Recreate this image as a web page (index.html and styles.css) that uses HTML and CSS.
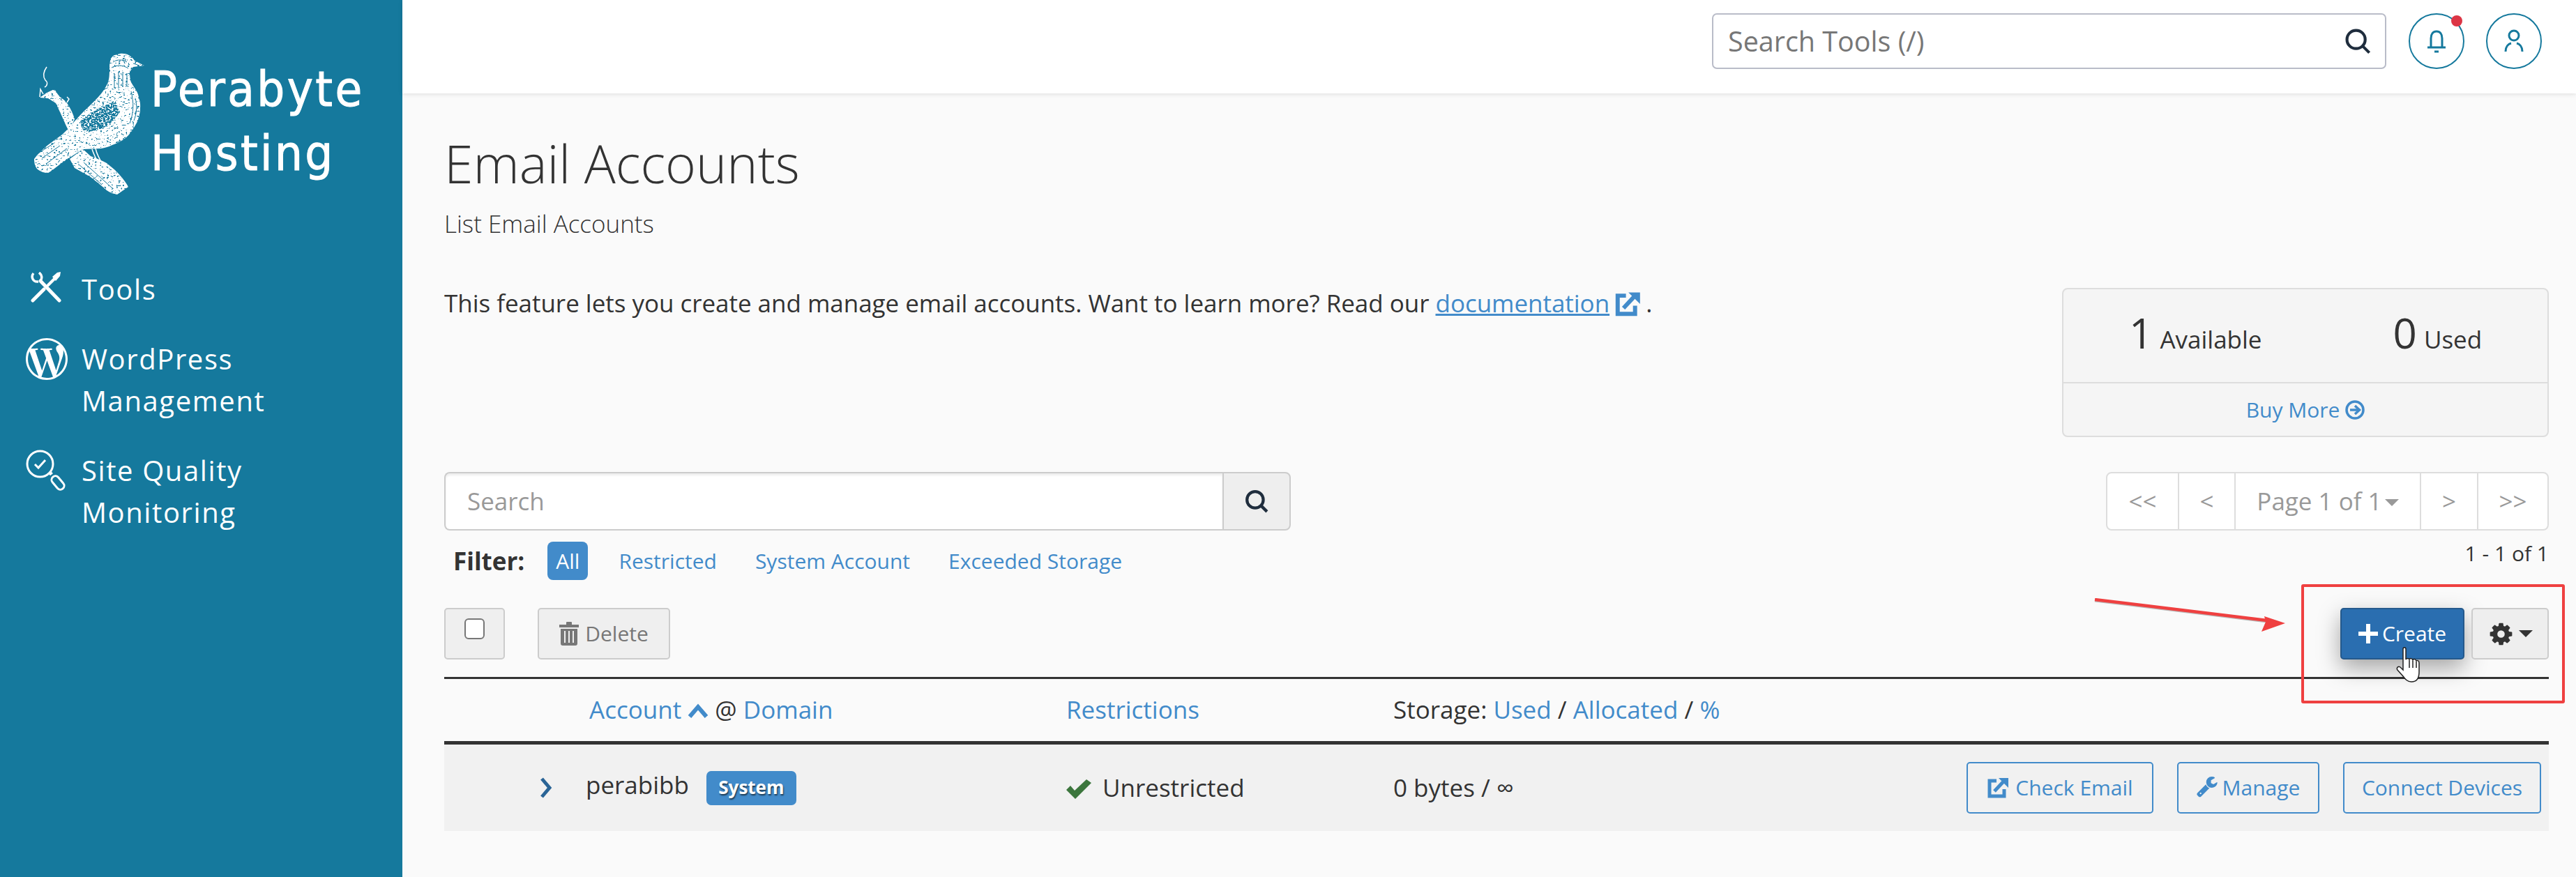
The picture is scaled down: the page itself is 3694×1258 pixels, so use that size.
FILE: index.html
```html
<!DOCTYPE html>
<html lang="en">
<head>
<meta charset="utf-8">
<title>Email Accounts</title>
<link rel="stylesheet" href="styles.css">
</head>
<body>
<div class="app">
  <aside class="sidebar">
    <div class="logo">
      <svg class="bird" viewBox="48 74 160 206" aria-hidden="true">
        <defs>
          <filter id="engrave" filterUnits="userSpaceOnUse" x="48" y="74" width="160" height="206">
            <feTurbulence type="fractalNoise" baseFrequency="0.3 0.45" numOctaves="2" seed="4" result="n"/>
            <feColorMatrix in="n" type="matrix" values="0 0 0 0 1  0 0 0 0 1  0 0 0 0 1  0 0 0 -12 8.4"/>
            <feComposite in="SourceGraphic" operator="in"/>
          </filter>
          <filter id="engrave-dark" filterUnits="userSpaceOnUse" x="48" y="74" width="160" height="206">
            <feTurbulence type="fractalNoise" baseFrequency="0.35 0.5" numOctaves="2" seed="9" result="n"/>
            <feColorMatrix in="n" type="matrix" values="0 0 0 0 1  0 0 0 0 1  0 0 0 0 1  0 0 0 -12 7"/>
            <feComposite in="SourceGraphic" operator="in"/>
          </filter>
        </defs>
        <g class="bird-shape" filter="url(#engrave)">
          <path d="M172 76C180 75 188 78 193 86L207 93 191 95 186 102C186 110 187 114 188 117 193 126 199 132 199 140 202 146 201 152 201 157 200 166 198 172 195 177 190 186 186 192 180 197 173 202 167 205 161 207 155 210 150 211 145 212L119 213C108 220 98 226 88 233 80 239 76 243 69 247 63 247 58 245 54 242 50 238 49 232 49 227 54 220 60 215 65 210 72 204 80 199 88 193 95 187 101 180 107 173 112 167 117 162 122 157 129 150 136 144 142 137 148 130 152 124 155 117 157 110 157 104 157 97 157 90 158 86 159 83 161 80 163 78 165 78Z"/>
          <path d="M100 227L119 213 130 223C138 226 146 229 153 233L165 243C172 250 179 258 184 267L168 278C162 277 157 275 153 272 146 266 138 259 130 253 122 248 114 244 107 240Z"/>
          <path d="M69 140L57 139 67 132 78 127C81 131 83 135 86 138 92 142 96 146 98 150 102 156 105 163 107 170L99 187C96 182 94 178 92 173 88 164 84 155 80 147 76 144 72 142 69 140Z"/>
        </g>
        <path class="bird-dark" d="M115 173C122 166 130 161 138 157 147 152 156 147 165 143L172 160C166 168 160 175 153 180 144 185 135 187 126 188 122 187 119 185 117 182Z" filter="url(#engrave-dark)"/>
        <g class="bird-hatch">
          <path d="M162 88C168 84 176 84 182 88"/>
          <path d="M160 96C167 92 176 92 184 97"/>
          <path d="M164 104V126M170 102V126M176 102V124M182 104V122"/>
          <path d="M188 130C192 146 192 160 186 176"/>
          <path d="M194 140C197 150 196 162 192 172"/>
          <path d="M60 226L86 208M66 234L96 212M56 218L78 204"/>
          <path d="M120 232L160 268M112 234L146 264"/>
          <circle cx="178" cy="85" r="2"/>
          <path d="M191 90L200 93"/>
        </g>
        <g class="bird-line">
          <path d="M67 95C62 102 61 108 65 114 69 117 68 122 64 124"/>
          <path d="M57 138L58 127 62 134"/>
          <path d="M96 146L99 141 96 138"/>
          <path d="M132 213C135 222 139 229 143 238"/>
          <path d="M137 212C139 221 143 228 148 236"/>
        </g>
      </svg>
      <div class="brand">
        <span class="brand-line">Perabyte</span>
        <span class="brand-line">Hosting</span>
      </div>
    </div>
    <nav class="nav">
      <a class="nav-item">
        <span class="nav-icon">
          <svg class="ic-tools" viewBox="0 0 44 44">
            <path class="t-line" d="M14 13L41 41"/>
            <path class="t-thin" d="M4 2C0 7 3 15 11 14M12 1C16 4 17 9 14 13"/>
            <path class="t-line" d="M3 41L19 25"/>
            <path class="t-line t-mid" d="M25 19L34 10"/>
            <path class="t-fill" d="M31 7L38 1 43 0 42 6 36 13Z"/>
          </svg>
        </span>
        <span>Tools</span>
      </a>
      <a class="nav-item">
        <span class="nav-icon">
          <svg class="ic-wp" viewBox="0 0 24 24"><path d="M21.469 6.825c.84 1.537 1.318 3.3 1.318 5.175 0 3.979-2.156 7.456-5.363 9.325l3.295-9.527c.615-1.54.82-2.771.82-3.864 0-.405-.026-.78-.07-1.11m-7.981.105c.647-.03 1.232-.105 1.232-.105.582-.075.514-.93-.067-.899 0 0-1.755.135-2.88.135-1.064 0-2.85-.15-2.85-.15-.585-.03-.661.855-.075.885 0 0 .54.061 1.125.09l1.68 4.605-2.37 7.08L5.354 6.9c.649-.03 1.234-.1 1.234-.1.585-.075.516-.93-.065-.896 0 0-1.746.138-2.874.138-.2 0-.438-.008-.69-.015C4.911 3.15 8.235 1.215 12 1.215c2.809 0 5.365 1.072 7.286 2.833-.046-.003-.091-.009-.141-.009-1.06 0-1.812.923-1.812 1.914 0 .89.513 1.643 1.06 2.531.411.72.89 1.643.89 2.977 0 .915-.354 1.994-.821 3.479l-1.075 3.585-3.9-11.61.001.014zM12 22.784c-1.059 0-2.081-.153-3.048-.437l3.237-9.406 3.315 9.087c.024.053.05.101.078.149-1.12.393-2.325.609-3.582.609M1.211 12c0-1.564.336-3.05.935-4.39L7.29 21.709C3.694 19.96 1.212 16.271 1.211 12M12 0C5.385 0 0 5.385 0 12s5.385 12 12 12 12-5.385 12-12S18.615 0 12 0"/></svg>
        </span>
        <span>WordPress<br>Management</span>
      </a>
      <a class="nav-item">
        <span class="nav-icon">
          <svg class="ic-quality" viewBox="0 0 60 60">
            <circle cx="20.500" cy="20.500" r="18.500"/>
            <path d="M13 21L18 26 28 15"/>
            <path d="M34 36L38 33"/>
            <rect x="35" y="42" width="22" height="11" rx="5.500" transform="rotate(50 46 47.500)"/>
          </svg>
        </span>
        <span>Site Quality<br>Monitoring</span>
      </a>
    </nav>
  </aside>

  <div class="main">
    <header class="topbar">
      <div class="tool-search">
        <span class="tool-placeholder">Search Tools (/)</span>
        <svg class="ic-search-top" viewBox="0 0 32 32"><circle cx="14" cy="14" r="11"/><path d="M22 22L30 30"/></svg>
      </div>
      <button class="round-btn">
        <svg class="ic-round" viewBox="0 0 32 36"><path d="M8 26V14C8 8 11 4 16 4S24 8 24 14V26"/><path d="M3 27H29"/><path d="M13 33H19"/></svg>
        <span class="dot"></span>
      </button>
      <button class="round-btn">
        <svg class="ic-round" viewBox="0 0 32 36"><circle cx="16" cy="10" r="7"/><path d="M4 33C4 26 8 22 12 21M28 33C28 26 24 22 20 21"/></svg>
      </button>
    </header>

    <main class="content">
      <h1 class="title">Email Accounts</h1>
      <p class="subtitle">List Email Accounts</p>

      <div class="intro-row">
        <p class="intro">This feature lets you create and manage email accounts. Want to learn more? Read our <a class="link underline">documentation</a> <svg class="ic-ext ic-ext-lg" viewBox="0 0 32 32"><path d="M14 6H4V28H25V18"/><path d="M11 21L25 6"/><path class="solid" d="M17 2H31V16Z"/></svg> .</p>
        <div class="stats">
          <div class="stats-top">
            <div class="stat"><span class="stat-num">1</span> Available</div>
            <div class="stat"><span class="stat-num">0</span> Used</div>
          </div>
          <div class="stats-foot"><a class="link">Buy More</a> <svg class="ic-arrow" viewBox="0 0 28 28"><circle cx="14" cy="14" r="12"/><path d="M7 14H19"/><path d="M14 8L20.500 14 14 20"/></svg></div>
        </div>
      </div>

      <div class="list-controls">
        <div class="controls-left">
          <div class="search-group">
            <div class="search-input">Search</div>
            <div class="search-btn"><svg class="ic-search-dark" viewBox="0 0 32 32"><circle cx="14" cy="14" r="11"/><path d="M22 22L30 30"/></svg></div>
          </div>
          <div class="filters">
            <strong class="filter-label">Filter:</strong>
            <a class="filter active">All</a>
            <a class="filter">Restricted</a>
            <a class="filter">System Account</a>
            <a class="filter">Exceeded Storage</a>
          </div>
        </div>
        <div class="controls-right">
          <div class="pager">
            <span class="pg pg-a">&lt;&lt;</span>
            <span class="pg pg-b">&lt;</span>
            <span class="pg pg-c">Page 1 of 1<i class="caret caret-gray"></i></span>
            <span class="pg pg-d">&gt;</span>
            <span class="pg pg-e">&gt;&gt;</span>
          </div>
          <div class="count">1 - 1 of 1</div>
        </div>
      </div>

      <div class="toolbar">
        <div class="tool-left">
          <div class="btn btn-check"><span class="checkbox"></span></div>
          <div class="btn btn-delete">
            <svg class="ic-trash" viewBox="0 0 28 34"><path d="M0 4H10V1Q10 0 11 0H17Q18 0 18 1V4H28V8H0Z"/><path d="M2 10H26V31Q26 34 23 34H5Q2 34 2 31ZM7 13V30H9V13ZM13 13V30H15V13ZM19 13V30H21V13Z" fill-rule="evenodd"/></svg>
            Delete
          </div>
        </div>
        <div class="tool-right">
          <div class="btn btn-create"><svg class="ic-plus" viewBox="0 0 28 28"><path d="M14 0V28M0 14H28"/></svg>Create</div>
          <div class="btn btn-gear">
            <svg class="ic-cog" viewBox="0 0 1792 1792"><path d="M1152 896q0-106-75-181t-181-75-181 75-75 181 75 181 181 75 181-75 75-181zm512-109v222q0 12-8 23t-20 13l-185 28q-19 54-39 91 35 50 107 138 10 12 10 25t-9 23q-27 37-99 108t-94 71q-12 0-26-9l-138-108q-44 23-91 38-16 136-29 186-7 28-36 28h-222q-14 0-24.500-8.500t-11.500-21.500l-28-184q-49-16-90-37l-141 107q-10 9-25 9-14 0-25-11-126-114-165-168-7-10-7-23 0-12 8-23 15-21 51-66.500t54-70.500q-27-50-41-99l-183-27q-13-2-21-12.500t-8-23.500v-222q0-12 8-23t19-13l186-28q14-46 39-92-40-57-107-138-10-12-10-24 0-10 9-23 26-36 98.500-107.500t94.500-71.500q13 0 26 10l138 107q44-23 91-38 16-136 29-186 7-28 36-28h222q14 0 24.500 8.500t11.500 21.500l28 184q49 16 90 37l142-107q9-9 24-9 13 0 25 10 129 119 165 170 7 8 7 22 0 12-8 23-15 21-51 66.500t-54 70.500q26 50 41 98l183 28q13 2 21 12.500t8 23.500z"/></svg>
            <i class="caret caret-dark"></i>
          </div>
        </div>
      </div>

      <div class="table">
        <div class="thead">
          <div><a class="link">Account</a> <svg class="ic-up" viewBox="0 0 30 22"><path d="M3 19L15 5 27 19"/></svg> @ <a class="link">Domain</a></div>
          <div><a class="link">Restrictions</a></div>
          <div>Storage: <a class="link">Used</a> / <a class="link">Allocated</a> / <a class="link">%</a></div>
        </div>
        <div class="trow">
          <div class="row-account">
            <svg class="ic-chev" viewBox="0 0 20 32"><path d="M4 3L15 16 4 29"/></svg>
            <span class="acct">perabibb</span>
            <span class="badge">System</span>
          </div>
          <div><svg class="ic-check" viewBox="0 0 36 28"><path d="M0 15L6 9 12 16 29 0 36 5 13 28Z"/></svg>Unrestricted</div>
          <div>0 bytes / ∞</div>
          <div class="row-actions">
            <a class="outline-btn btn-mail"><svg class="ic-ext" viewBox="0 0 32 32"><path d="M14 6H4V28H25V18"/><path d="M11 21L25 6"/><path class="solid" d="M17 2H31V16Z"/></svg>Check Email</a>
            <a class="outline-btn btn-manage"><svg class="ic-wrench" viewBox="0 0 1792 1792"><path d="M384 1344q0-26-19-45t-45-19-45 19-19 45 19 45 45 19 45-19 19-45zm644-420l-682 682q-37 37-90 37-52 0-91-37l-106-108q-38-36-38-90 0-53 38-91l681-681q39 98 114.500 173.500t173.500 114.500zm634-435q0 39-23 106-47 134-164.500 217.500t-258.500 83.500q-185 0-316.500-131.500t-131.500-316.500 131.500-316.500 316.500-131.500q58 0 121.500 16.500t107.500 46.500q16 11 16 28t-16 28l-293 169v224l193 107q5-3 79-48.500t135.500-81 70.500-35.500q15 0 23.500 10t8.500 25z"/></svg>Manage</a>
            <a class="outline-btn btn-connect">Connect Devices</a>
          </div>
        </div>
      </div>
    </main>
  </div>

  <div class="mark-box"></div>
  <svg class="mark-arrow" viewBox="0 0 276 50"><path class="shaft-shadow" d="M1 4L248 34"/><path class="shaft" d="M1 2L248 32"/><path class="head" d="M274 36L244 26 246 34 240 48Z"/></svg>
  <svg class="hand" viewBox="0 0 38 52"><path d="M10 3C10 0 14 0 14 3V18C15 16 18 16 19 18 20 16 23 16 24 19 25 17 28 17 29 20 30 19 33 19 33 23V36C33 44 30 50 22 50 16 50 13 46 10 42L2 33C0 30 3 27 6 29L10 33Z"/><path class="hand-lines" d="M19 19V30M24 20V30M29 21V30"/></svg>
</div>
</body>
</html>
```

FILE: styles.css
```css
* { box-sizing: border-box; }
html, body { margin: 0; padding: 0; }
body {
  font-family: "Open Sans", "Liberation Sans", sans-serif;
  font-size: 35px;
  line-height: 50px;
  color: #333;
  background: #fafafa;
}
.app { position: relative; display: flex; height: 1258px; overflow: hidden; }
p, h1 { margin: 0; }

/* Sidebar */
.sidebar { flex: none; width: 577px; background: #15799d; color: #fff; padding-top: 75px; }
.logo { display: flex; height: 205px; padding-left: 48px; }
.bird { flex: none; width: 160px; height: 206px; }
.bird-shape { fill: #fff; }
.bird-dark { fill: #15799d; }
.bird-hatch { fill: none; stroke: #15799d; stroke-width: 1; }
.bird-line { fill: none; stroke: #fff; stroke-width: 1.500; }
.brand {
  display: flex; flex-direction: column; margin-left: 8px; padding-top: 7px;
  font-family: "DejaVu Sans", sans-serif; font-stretch: condensed;
  font-size: 70px; line-height: 92px; letter-spacing: 3.400px;
  -webkit-text-stroke: 1px #fff;
}
.brand-line { display: block; height: 92px; }
.nav { display: flex; flex-direction: column; gap: 40px; margin-top: 105px; padding-left: 37px; }
.nav-item { display: flex; font-size: 40px; line-height: 60px; letter-spacing: 1.600px; color: #fff; }
.nav-icon { flex: none; width: 80px; display: flex; }
.ic-tools { width: 44px; height: 44px; margin: 5px 0 0 7px; }
.t-line { fill: none; stroke: #fff; stroke-width: 5; stroke-linecap: round; }
.t-mid { stroke-width: 4; }
.t-thin { fill: none; stroke: #fff; stroke-width: 3.500; }
.t-fill { fill: #fff; }
.ic-wp { width: 60px; height: 60px; fill: #fff; }
.ic-quality { width: 60px; height: 60px; fill: none; stroke: #fff; stroke-width: 3; }

/* Top bar */
.main { flex: 1; min-width: 0; }
.topbar {
  display: flex; justify-content: flex-end; gap: 31px; height: 134px; padding: 19px 49px 0 0;
  background: #fff; box-shadow: 0 1px 6px rgba(0, 0, 0, .12);
}
.tool-search {
  display: flex; align-items: center; justify-content: space-between; width: 967px; height: 80px; margin-right: 1px;
  padding: 0 20px 0 21px; background: #fff; border: 2px solid #b9bcc8; border-radius: 7px;
}
.tool-placeholder { font-size: 39.500px; color: #777; }
.ic-search-top { width: 38px; height: 38px; fill: none; stroke: #1f2d3d; stroke-width: 3.500; }
.ic-search-dark { width: 34px; height: 34px; fill: none; stroke: #1f2d3d; stroke-width: 4; }
.round-btn {
  position: relative; display: flex; align-items: center; justify-content: center; flex: none;
  width: 80px; height: 80px; padding: 0; background: #fff; border: 2px solid #15799d; border-radius: 50%;
}
.ic-round { width: 32px; height: 36px; fill: none; stroke: #15799d; stroke-width: 3; }
.dot { position: absolute; top: 1px; right: 1px; width: 16px; height: 16px; border-radius: 50%; background: #dc3545; }

/* Content */
.content { padding: 60px 39px 0 60px; }
.title { font-size: 75px; line-height: 80px; font-weight: 300; }
.subtitle { font-size: 35px; line-height: 50px; font-weight: 300; margin-top: 22px; }
.link { color: #428bca; }
.underline { text-decoration: underline; }
.intro-row { display: flex; justify-content: space-between; margin-top: 64px; }
.intro { letter-spacing: -.03px; }
.ic-ext { width: 32px; height: 32px; fill: none; stroke: #428bca; stroke-width: 5; }
.ic-ext .solid { fill: #428bca; stroke: none; }
.ic-ext-lg { width: 38px; height: 38px; margin: 0 -2px; vertical-align: -7px; }

.stats {
  width: 698px; height: 214px; margin-top: 3px; background: #f5f5f5;
  border: 2px solid #ddd; border-radius: 8px;
}
.stats-top { display: flex; align-items: flex-end; height: 135px; padding: 0 0 31px 94px; border-bottom: 2px solid #ddd; }
.stat { font-size: 35px; line-height: 60px; }
.stat + .stat { margin-left: 188px; }
.stat-num { font-size: 60px; font-weight: 400; margin-right: 1px; }
.stats-foot { display: flex; align-items: center; justify-content: center; gap: 8px; height: 75px; font-size: 30px; }
.ic-arrow { width: 28px; height: 28px; fill: none; stroke: #428bca; stroke-width: 3.500; }

.list-controls { display: flex; justify-content: space-between; margin-top: 50px; }
.search-group { display: flex; width: 1214px; height: 84px; }
.search-input {
  flex: 1; padding: 0 31px; background: #fff; border: 2px solid #ccc; border-right: 0;
  border-radius: 8px 0 0 8px; font-size: 35px; line-height: 80px; color: #999;
  box-shadow: inset 0 3px 3px rgba(0, 0, 0, .07);
}
.search-btn {
  display: flex; align-items: center; justify-content: center; width: 98px; flex: none;
  background: #eee; border: 2px solid #ccc; border-radius: 0 8px 8px 0;
}
.filters { display: flex; align-items: center; height: 55px; margin-top: 16px; padding-left: 13px; font-size: 30px; }
.filter-label { font-size: 35px; font-weight: 700; margin-right: 33px; }
.filter { color: #428bca; margin-right: 55px; line-height: 55px; }
.filter.active { margin-right: 44px; padding: 0 12px; color: #fff; background: #428bca; border-radius: 8px; }

.controls-right { display: flex; flex-direction: column; align-items: flex-end; }
.pager { display: flex; height: 84px; background: #fff; border: 2px solid #ddd; border-radius: 8px; color: #999; font-size: 35px; line-height: 80px; }
.pg { display: flex; align-items: center; justify-content: center; border-left: 2px solid #ddd; }
.pg-a { width: 101px; border-left: 0; }
.pg-b { width: 81px; }
.pg-c { width: 266px; gap: 4px; }
.pg-d { width: 82px; }
.pg-e { width: 101px; }
.caret { display: inline-block; width: 0; height: 0; border-left: 10px solid transparent; border-right: 10px solid transparent; }
.caret-gray { border-top: 10px solid #999; margin-top: 4px; }
.caret-dark { border-top: 10px solid #333; }
.count { font-size: 30px; line-height: 40px; margin-top: 13px; }

.toolbar { display: flex; justify-content: space-between; margin-top: 40px; }
.tool-left, .tool-right { display: flex; }
.tool-left { gap: 47px; }
.tool-right { gap: 10px; }
.btn { display: flex; align-items: center; justify-content: center; height: 74px; font-size: 30px; border: 2px solid #ccc; border-radius: 5px; background: #efefef; }
.btn-check { width: 87px; align-items: flex-start; padding-top: 13px; }
.checkbox { display: block; width: 29px; height: 30px; background: #fff; border: 2px solid #777; border-radius: 6px; }
.btn-delete { width: 190px; gap: 9px; color: #777; }
.ic-trash { width: 28px; height: 34px; fill: #777; }
.btn-create {
  width: 178px; gap: 6px; color: #fff; background: #2a6eb0; border-color: #24598c;
  box-shadow: 0 12px 32px rgba(0, 0, 0, .35);
}
.ic-plus { width: 28px; height: 28px; fill: none; stroke: #fff; stroke-width: 6; }
.btn-gear { width: 111px; gap: 7px; background: #eee; }
.ic-cog { width: 37px; height: 37px; fill: #333; }

/* Table */
.table { margin-top: 25px; }
.thead {
  display: grid; grid-template-columns: 684px 469px 1fr; height: 97px; padding-left: 208px; padding-top: 19px;
  border-top: 3px solid #333; border-bottom: 5px solid #333; white-space: nowrap;
}
.ic-up { width: 30px; height: 22px; fill: none; stroke: #428bca; stroke-width: 6; }
.trow {
  display: grid; grid-template-columns: 892px 469px 1fr auto; align-items: center; height: 124px; background: #f1f1f1;
}
.row-account { display: flex; align-items: center; padding-left: 136px; }
.ic-chev { width: 20px; height: 32px; fill: none; stroke: #2a6496; stroke-width: 5; }
.acct { margin: 0 0 8px 47px; }
.badge {
  display: block; width: 129px; height: 49px; margin-left: 25px; background: #428bca; color: #fff; border-radius: 7px;
  font-size: 26px; font-weight: 700; line-height: 47px; text-align: center; text-shadow: 1px 2px 2px rgba(0, 0, 0, .6);
}
.ic-check { width: 36px; height: 28px; margin-right: 16px; fill: #3c763d; vertical-align: -3px; }
.row-actions { display: flex; gap: 34px; padding-right: 11px; }
.outline-btn {
  display: flex; align-items: center; justify-content: center; height: 74px; font-size: 30px; color: #428bca;
  border: 2px solid #428bca; border-radius: 5px;
}
.outline-btn .ic-ext { margin-right: 9px; }
.ic-wrench { width: 32px; height: 32px; margin-right: 5px; fill: #428bca; }
.btn-mail { width: 268px; }
.btn-manage { width: 204px; }
.btn-connect { width: 284px; }

/* Overlays */
.mark-box { position: absolute; left: 3300px; top: 838px; width: 378px; height: 171px; border: 4px solid #ef4040; border-radius: 3px; }
.mark-arrow { position: absolute; left: 3003px; top: 858px; width: 276px; height: 50px; }
.shaft { stroke: #ef4040; stroke-width: 4.500; fill: none; }
.shaft-shadow { stroke: rgba(0, 0, 0, .25); stroke-width: 3; fill: none; }
.head { fill: #ef4040; }
.hand { position: absolute; left: 3436px; top: 928px; width: 38px; height: 52px; fill: #fff; stroke: #222; stroke-width: 1.500; }
.hand-lines { fill: none; stroke: #222; stroke-width: 1.500; }
```
